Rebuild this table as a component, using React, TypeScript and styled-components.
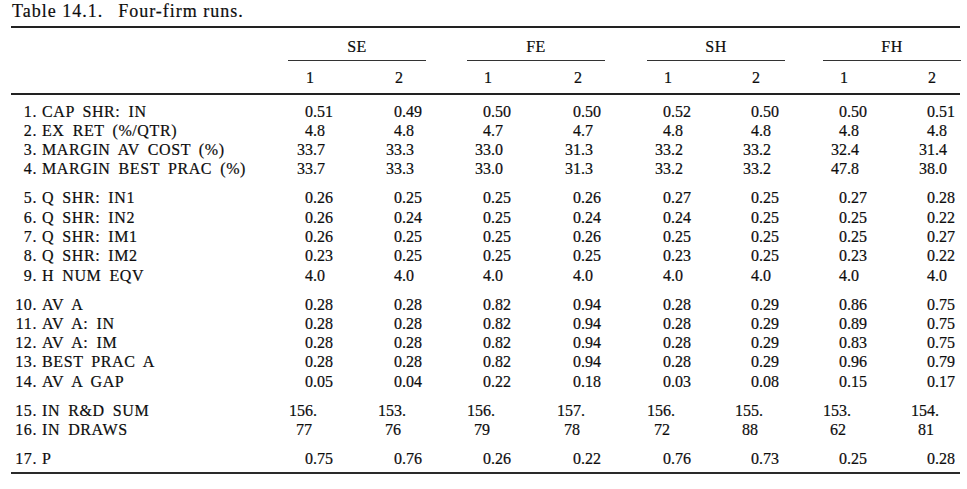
import React from 'react'
import styled, { createGlobalStyle } from 'styled-components'

type Kind = 'frac' | 'pct' | 'sum' | 'draws'

interface RowType {
  n: string
  label: string
  kind: Kind
  values: string[]
}

const GROUPS = ['SE', 'FE', 'SH', 'FH']

const BLOCKS: RowType[][] = [
  [
    { n: '1.', label: 'CAP SHR: IN', kind: 'frac', values: ['0.51', '0.49', '0.50', '0.50', '0.52', '0.50', '0.50', '0.51'] },
    { n: '2.', label: 'EX RET (%/QTR)', kind: 'frac', values: ['4.8', '4.8', '4.7', '4.7', '4.8', '4.8', '4.8', '4.8'] },
    { n: '3.', label: 'MARGIN AV COST (%)', kind: 'pct', values: ['33.7', '33.3', '33.0', '31.3', '33.2', '33.2', '32.4', '31.4'] },
    { n: '4.', label: 'MARGIN BEST PRAC (%)', kind: 'pct', values: ['33.7', '33.3', '33.0', '31.3', '33.2', '33.2', '47.8', '38.0'] },
  ],
  [
    { n: '5.', label: 'Q SHR: IN1', kind: 'frac', values: ['0.26', '0.25', '0.25', '0.26', '0.27', '0.25', '0.27', '0.28'] },
    { n: '6.', label: 'Q SHR: IN2', kind: 'frac', values: ['0.26', '0.24', '0.25', '0.24', '0.24', '0.25', '0.25', '0.22'] },
    { n: '7.', label: 'Q SHR: IM1', kind: 'frac', values: ['0.26', '0.25', '0.25', '0.26', '0.25', '0.25', '0.25', '0.27'] },
    { n: '8.', label: 'Q SHR: IM2', kind: 'frac', values: ['0.23', '0.25', '0.25', '0.25', '0.23', '0.25', '0.23', '0.22'] },
    { n: '9.', label: 'H NUM EQV', kind: 'frac', values: ['4.0', '4.0', '4.0', '4.0', '4.0', '4.0', '4.0', '4.0'] },
  ],
  [
    { n: '10.', label: 'AV A', kind: 'frac', values: ['0.28', '0.28', '0.82', '0.94', '0.28', '0.29', '0.86', '0.75'] },
    { n: '11.', label: 'AV A: IN', kind: 'frac', values: ['0.28', '0.28', '0.82', '0.94', '0.28', '0.29', '0.89', '0.75'] },
    { n: '12.', label: 'AV A: IM', kind: 'frac', values: ['0.28', '0.28', '0.82', '0.94', '0.28', '0.29', '0.83', '0.75'] },
    { n: '13.', label: 'BEST PRAC A', kind: 'frac', values: ['0.28', '0.28', '0.82', '0.94', '0.28', '0.29', '0.96', '0.79'] },
    { n: '14.', label: 'AV A GAP', kind: 'frac', values: ['0.05', '0.04', '0.22', '0.18', '0.03', '0.08', '0.15', '0.17'] },
  ],
  [
    { n: '15.', label: 'IN R&D SUM', kind: 'sum', values: ['156.', '153.', '156.', '157.', '156.', '155.', '153.', '154.'] },
    { n: '16.', label: 'IN DRAWS', kind: 'draws', values: ['77', '76', '79', '78', '72', '88', '62', '81'] },
  ],
  [
    { n: '17.', label: 'P', kind: 'frac', values: ['0.75', '0.76', '0.26', '0.22', '0.76', '0.73', '0.25', '0.28'] },
  ],
]

// left inset of a value inside its column, by kind of number
const PAD: Record<Kind, number> = { frac: 17, pct: 9, sum: 1, draws: 8 }

const GlobalStyle = createGlobalStyle`
  html, body {
    margin: 0;
    background: #fff;
  }
  body {
    font-family: "Liberation Serif", "Times New Roman", serif;
    color: #0d0d0d;
    -webkit-text-stroke: 0.2px #0d0d0d;
  }
`

const App: React.FC = () => {
  return (
    <Page>
      <GlobalStyle />
      <Caption>
        <span>Table 14.1.</span>
        <span>Four-firm runs.</span>
      </Caption>
      <Table>
        <GroupRow>
          <span />
          {GROUPS.map((g) => (
            <GroupHead key={g}>{g}</GroupHead>
          ))}
        </GroupRow>
        <SubRow>
          <span />
          {GROUPS.map((g) => (
            <React.Fragment key={g}>
              <SubHead>1</SubHead>
              <SubHead>2</SubHead>
            </React.Fragment>
          ))}
        </SubRow>
        <Body>
          {BLOCKS.map((block, bi) => (
            <Block key={bi}>
              {block.map((row) => (
                <Row key={row.n}>
                  <Label>
                    <LabelNum>{row.n}</LabelNum>
                    <LabelText>{row.label}</LabelText>
                  </Label>
                  {row.values.map((v, i) => (
                    <Value key={i} pad={PAD[row.kind]}>
                      {v}
                    </Value>
                  ))}
                </Row>
              ))}
            </Block>
          ))}
        </Body>
      </Table>
    </Page>
  )
}

const COLS = '277px 89px 89px 90px 90px 88px 88px 88px 1fr'

const Page = styled.div`
  width: 949px;
  padding: 1px 0 0 11px;
`

const Caption = styled.div`
  display: flex;
  gap: 15px;
  font-size: 18px;
  line-height: 20px;
  letter-spacing: 1px;
  padding-left: 1px;
`

const Table = styled.div`
  margin-top: 5px;
  border-top: 2px solid #222;
  border-bottom: 2px solid #2a2a2a;
`

const GroupRow = styled.div`
  display: grid;
  grid-template-columns: 277px 179px 180px 176px 1fr;
  padding-top: 9px;
`

const GroupHead = styled.div`
  width: 138px;
  font-size: 16px;
  line-height: 20px;
  letter-spacing: 0.5px;
  text-align: center;
  padding-bottom: 3px;
  border-bottom: 1.5px solid #333;
`

const SubRow = styled.div`
  display: grid;
  grid-template-columns: ${COLS};
  padding: 6.5px 0 5.5px;
  border-bottom: 2px solid #222;
`

const SubHead = styled.div`
  font-size: 16px;
  line-height: 20px;
  padding-left: 18px;
`

const Body = styled.div`
  padding: 6.5px 0 4px;
`

const Block = styled.div`
  & + & {
    margin-top: 9.7px;
  }
`

const Row = styled.div`
  display: grid;
  grid-template-columns: ${COLS};
  font-size: 16px;
  line-height: 19.3px;
`

const Label = styled.div`
  display: flex;
  letter-spacing: 0.6px;
`

const LabelNum = styled.span`
  width: 26px;
  text-align: right;
`

const LabelText = styled.span`
  margin-left: 5px;
  word-spacing: 3.5px;
  white-space: nowrap;
`

const Value = styled.div<{ pad: number }>`
  padding-left: ${({ pad }) => pad}px;
  white-space: nowrap;
`

export default App
